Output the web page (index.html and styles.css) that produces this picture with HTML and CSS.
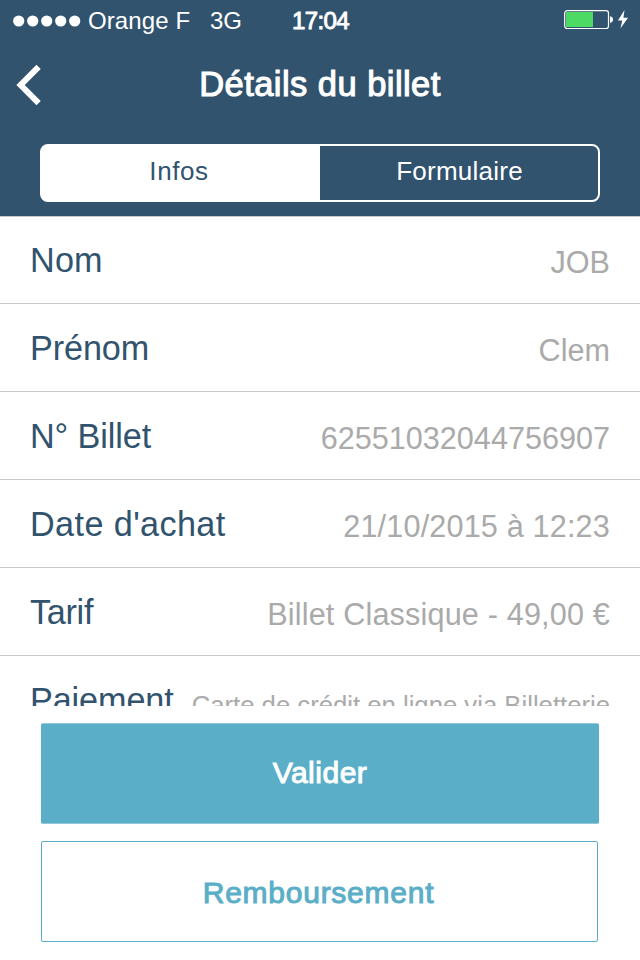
FILE: index.html
```
<!DOCTYPE html>
<html lang="fr">
<head>
<meta charset="utf-8">
<title>Détails du billet</title>
<link rel="stylesheet" href="styles.css">
</head>
<body>
<div class="screen">
  <header class="header">
    <div class="status">
      <svg class="signal" width="68" height="12" viewBox="0 0 68 12" fill="#fff"><circle cx="5.7" cy="6" r="5.6"/><circle cx="19.7" cy="6" r="5.6"/><circle cx="33.7" cy="6" r="5.6"/><circle cx="47.7" cy="6" r="5.6"/><circle cx="61.7" cy="6" r="5.6"/></svg>
      <span class="carrier">Orange F</span>
      <span class="network">3G</span>
      <span class="time">17:04</span>
      <svg class="battery" width="66" height="22" viewBox="0 0 66 22"><rect x=".7" y="1.7" width="43.8" height="17.8" rx="2.5" fill="none" stroke="#fff" stroke-width="1.2"/><rect x="2" y="3" width="27" height="15" fill="#4cd964"/><path d="M46 7.2Q49 7.8 49 10.5T46 14Z" fill="#fff"/><path d="M60.5 1L54 11.5H58.3L56.4 19.5L64 8.7H59.4Z" fill="#fff"/></svg>
    </div>
    <div class="navbar">
      <svg class="back" width="26" height="42" viewBox="0 0 26 42" fill="none" stroke="#fff" stroke-width="6"><path d="M22.6 2.8L4.6 21L22.6 39.2"/></svg>
      <h1 class="title">Détails du billet</h1>
    </div>
    <nav class="tabs">
      <span class="tab active">Infos</span>
      <span class="tab">Formulaire</span>
    </nav>
  </header>
  <main class="list">
    <div class="row"><span class="label">Nom</span><span class="value">JOB</span></div>
    <div class="row"><span class="label">Prénom</span><span class="value">Clem</span></div>
    <div class="row"><span class="label">N° Billet</span><span class="value">62551032044756907</span></div>
    <div class="row"><span class="label loose">Date d'achat</span><span class="value loose">21/10/2015 à 12:23</span></div>
    <div class="row"><span class="label tight">Tarif</span><span class="value loose">Billet Classique - 49,00 €</span></div>
    <div class="row"><span class="label">Paiement</span><span class="value small">Carte de crédit en ligne via Billetterie</span></div>
  </main>
  <footer class="actions">
    <div class="button primary">Valider</div>
    <div class="button outline">Remboursement</div>
  </footer>
</div>
</body>
</html>
```
FILE: styles.css
```
* { box-sizing: border-box; }
body { margin: 0; background: #fff; font-family: "Liberation Sans", Arial, sans-serif; }
.screen { width: 640px; height: 960px; display: flex; flex-direction: column; overflow: hidden; }
.header { height: 216px; flex: none; background: #31536e; color: #fff; }
.status { height: 40px; display: flex; align-items: center; padding: 2px 10px 0 13px; font-size: 24px; line-height: 38px; white-space: nowrap; }
.signal { flex: none; margin-top: -1px; }
.carrier { margin-left: 7px; width: 122px; letter-spacing: .1px; }
.network { width: 82px; }
.time { letter-spacing: -.6px; -webkit-text-stroke: .9px #fff; }
.battery { margin-left: auto; flex: none; margin-top: -2px; }
.navbar { height: 104px; display: grid; grid-template-columns: 40px 1fr 40px; padding: 0 16px; }
.back { margin-top: 24px; }
.title { margin: 0; font-size: 34.5px; line-height: 89px; font-weight: 400; letter-spacing: .45px; text-align: center; white-space: nowrap; -webkit-text-stroke: 1.1px #fff; }
.tabs { margin: 0 40px; height: 58px; border: 2px solid #fff; border-radius: 8px; display: grid; grid-template-columns: 1fr 1fr; overflow: hidden; background: linear-gradient(90deg, #fff 50%, #31536e 50%); }
.tab { text-align: center; font-size: 26px; line-height: 50px; letter-spacing: .25px; padding-left: 1px; }
.tab.active { color: #31536e; padding: 0 4px 0 0; letter-spacing: .6px; }
.list { height: 490px; flex: none; overflow: hidden; }
.row { height: 88px; display: flex; justify-content: space-between; padding: 0 30px; border-bottom: 1px solid #c8c7cc; white-space: nowrap; }
.row:first-child { border-top: 1px solid #c8c7cc; }
.label { color: #31536e; font-size: 34.2px; line-height: 88px; letter-spacing: -.1px; }
.label.loose { letter-spacing: .4px; }
.label.tight { letter-spacing: -.3px; }
.value { color: #aaa; font-size: 30.6px; line-height: 93px; }
.value.loose { letter-spacing: .17px; }
.value.small { font-size: 25.7px; line-height: 98px; }
.row:first-child .label { line-height: 86px; letter-spacing: .2px; }
.row:first-child .value { line-height: 91px; }
.actions { padding: 17px 41px 0; display: flex; flex-direction: column; gap: 17px; }
.button { height: 101px; border-radius: 2px; text-align: center; font-size: 30px; line-height: 98px; }
.primary { background: #5aaec7; border: solid #8fc8d9; border-width: 1px 0; color: #fff; letter-spacing: .5px; -webkit-text-stroke: 1px #fff; }
.outline { border: 1px solid #5aaec7; color: #5aaec7; letter-spacing: .75px; line-height: 101px; margin-right: 1px; padding-right: 2px; -webkit-text-stroke: 1px #5aaec7; }
```
